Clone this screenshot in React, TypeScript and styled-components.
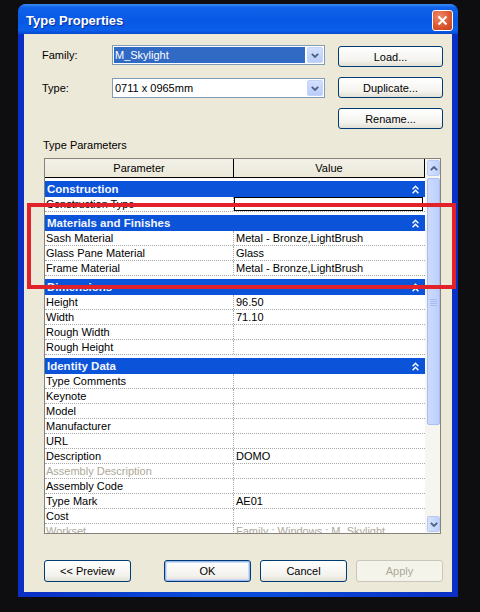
import styled, { createGlobalStyle } from 'styled-components';

const GlobalStyle = createGlobalStyle`
  html, body {
    margin: 0;
    padding: 0;
    background: #0e0e11;
  }
  body {
    width: 480px;
    height: 612px;
    overflow: hidden;
    font-family: "Liberation Sans", Arial, sans-serif;
    font-size: 11px;
  }
`;

const Page = styled.div`
  position: relative;
  width: 480px;
  height: 612px;
  padding: 4px 0 0 18px;
  box-sizing: border-box;
`;

const Window = styled.div`
  width: 440px;
  height: 593px;
  display: flex;
  flex-direction: column;
  border-radius: 8px 8px 0 0;
  overflow: hidden;
  background: #0a45d6;
`;

const TitleBar = styled.div`
  height: 30px;
  flex: none;
  box-sizing: border-box;
  display: flex;
  align-items: center;
  justify-content: space-between;
  padding: 3px 5px 0 8px;
  background: linear-gradient(#3d8cf4 0%, #0f62ea 12%, #0758e4 55%, #0a5fea 88%, #0846cc 100%);
`;

const Title = styled.span`
  color: #fff;
  font-weight: bold;
  font-size: 13px;
  text-shadow: 1px 1px 0 #0b2f9c;
`;

const CloseButton = styled.div`
  width: 21px;
  height: 21px;
  box-sizing: border-box;
  border: 1px solid #fff;
  border-radius: 3px;
  background: radial-gradient(circle at 35% 30%, #f08a6a, #d9552e 60%, #c2401c);
  display: flex;
  align-items: center;
  justify-content: center;
`;

const Frame = styled.div`
  flex: 1;
  display: flex;
  padding: 0 6px 5px;
  background: linear-gradient(to right, #0a2fc4, #0a4ad9 40%, #0a4ad9 60%, #0a2fc4);
`;

const Client = styled.div`
  flex: 1;
  display: flex;
  flex-direction: column;
  background: #ece9d8;
  padding: 11px 9px 0 18px;
`;

const TopRow = styled.div`
  display: flex;
  justify-content: space-between;
`;

const FieldGrid = styled.div`
  display: grid;
  grid-template-columns: 70px 213px;
  grid-auto-rows: 20px;
  row-gap: 13px;
  align-items: center;
  align-self: flex-start;
`;

const FieldLabel = styled.span`
  color: #000;
`;

const Combo = styled.div`
  height: 20px;
  box-sizing: border-box;
  display: flex;
  border: 1px solid #7f9db9;
  background: #fff;
`;

const ComboText = styled.div<{ $selected?: boolean }>`
  flex: 1;
  margin: 1px 2px 1px 1px;
  padding-left: 1px;
  line-height: 16px;
  color: ${(p) => (p.$selected ? '#fff' : '#000')};
  background: ${(p) => (p.$selected ? '#316ac5' : 'transparent')};
`;

const ComboArrow = styled.div`
  width: 16px;
  margin: 1px 1px 1px 0;
  border-radius: 2px;
  background: linear-gradient(#d3e0fd, #b9cdf9);
  border: 1px solid #c3d3fb;
  box-sizing: border-box;
  display: flex;
  align-items: center;
  justify-content: center;
`;

const SideButtons = styled.div`
  display: flex;
  flex-direction: column;
  gap: 10px;
  margin-top: 1px;
`;

const Button = styled.button<{ $w: number; $h: number; $default?: boolean }>`
  width: ${(p) => p.$w}px;
  height: ${(p) => p.$h}px;
  box-sizing: border-box;
  padding: 0;
  font-family: "Liberation Sans", Arial, sans-serif;
  font-size: 11px;
  color: #000;
  border: 1px solid #003c74;
  border-radius: 3px;
  background: linear-gradient(#ffffff, #f4f3ee 70%, #e3e0d4);
  box-shadow: ${(p) => (p.$default ? 'inset 0 0 0 1px #9cb7ee, inset 0 0 0 2px #cddbf7' : 'none')};

  &:disabled {
    color: #aca899;
    border-color: #c9c7ba;
    background: #f5f4ea;
  }
`;

const GroupLabel = styled.div`
  margin: 10px 0 6px 1px;
  line-height: 13px;
  color: #000;
`;

const GridFrame = styled.div`
  margin-left: 2px;
  width: 397px;
  height: 376px;
  box-sizing: border-box;
  border: 1px solid #85837c;
  display: flex;
  background: #fff;
`;

const Grid = styled.div`
  width: 380px;
  display: flex;
  flex-direction: column;
  overflow: hidden;
`;

const HeaderRow = styled.div`
  height: 19px;
  flex: none;
  box-sizing: border-box;
  display: flex;
  border-bottom: 1px solid #000;
  background: linear-gradient(#f3f1e8, #ebe8d8);
`;

const HeaderCell = styled.div<{ $first?: boolean }>`
  ${(p) => (p.$first ? 'width: 189px;' : 'flex: 1;')}
  box-sizing: border-box;
  border-right: 1px solid #000;
  text-align: center;
  line-height: 18px;
  color: #000;
`;

const Body = styled.div`
  flex: 1;
  min-height: 0;
  overflow: hidden;
`;

const SectionHeader = styled.div`
  margin-top: 3px;
  height: 16px;
  display: flex;
  align-items: center;
  justify-content: space-between;
  padding: 0 6px 0 2px;
  background: #0b53d8;
  color: #f2f6ff;
  font-weight: bold;
  font-size: 11.5px;
`;

const Row = styled.div`
  height: 15px;
  box-sizing: border-box;
  display: flex;
  border-bottom: 1px dotted #a8a8a8;
`;

const Cell = styled.div<{ $first?: boolean; $muted?: boolean; $editing?: boolean }>`
  ${(p) => (p.$first ? 'width: 189px; border-right: 1px dotted #a8a8a8;' : 'flex: 1;')}
  box-sizing: border-box;
  padding-left: ${(p) => (p.$first ? 1 : 2)}px;
  line-height: 14px;
  white-space: nowrap;
  overflow: hidden;
  color: ${(p) => (p.$muted ? '#aca899' : '#000')};
  outline: ${(p) => (p.$editing ? '1px solid #000' : 'none')};
  outline-offset: -1px;
  margin-right: ${(p) => (p.$editing ? 2 : 0)}px;
`;

const Scrollbar = styled.div`
  width: 15px;
  display: flex;
  flex-direction: column;
  padding: 1px 0 1px 2px;
  box-sizing: border-box;
  background: #f6f5f0;
`;

const ScrollButton = styled.div`
  height: 16px;
  flex: none;
  box-sizing: border-box;
  border: 1px solid #b7cbf7;
  border-radius: 2px;
  background: linear-gradient(to right, #d6e2fd, #c0d2fb);
  display: flex;
  align-items: center;
  justify-content: center;
`;

const ScrollThumb = styled.div`
  height: 247px;
  flex: none;
  margin-top: 2px;
  box-sizing: border-box;
  border: 1px solid #a8bef2;
  border-radius: 2px;
  background: linear-gradient(to right, #cddafd, #bccffb);
  display: flex;
  align-items: center;
  justify-content: center;
`;

const ScrollSpace = styled.div`
  flex: 1;
`;

const Footer = styled.div`
  display: flex;
  justify-content: space-between;
  margin: 26px 0 0 2px;
`;

const FooterGroup = styled.div`
  display: flex;
  gap: 9px;
`;

const Annotation = styled.div`
  position: absolute;
  left: 27px;
  top: 203px;
  width: 429px;
  height: 86px;
  box-sizing: border-box;
  border: 4px solid #e2222a;
  pointer-events: none;
`;

type Param = { name: string; value?: string; muted?: boolean; editing?: boolean };
type Section = { title: string; rows: Param[] };

const sections: Section[] = [
  { title: 'Construction', rows: [{ name: 'Construction Type', editing: true }] },
  {
    title: 'Materials and Finishes',
    rows: [
      { name: 'Sash Material', value: 'Metal - Bronze,LightBrush' },
      { name: 'Glass Pane Material', value: 'Glass' },
      { name: 'Frame Material', value: 'Metal - Bronze,LightBrush' },
    ],
  },
  {
    title: 'Dimensions',
    rows: [
      { name: 'Height', value: '96.50' },
      { name: 'Width', value: '71.10' },
      { name: 'Rough Width' },
      { name: 'Rough Height' },
    ],
  },
  {
    title: 'Identity Data',
    rows: [
      { name: 'Type Comments' },
      { name: 'Keynote' },
      { name: 'Model' },
      { name: 'Manufacturer' },
      { name: 'URL' },
      { name: 'Description', value: 'DOMO' },
      { name: 'Assembly Description', muted: true },
      { name: 'Assembly Code' },
      { name: 'Type Mark', value: 'AE01' },
      { name: 'Cost' },
      { name: 'Workset', value: 'Family : Windows : M_Skylight', muted: true },
    ],
  },
];

const Collapse = () => (
  <svg width="7" height="9" viewBox="0 0 7 9">
    <path d="M0.6 4.2 L3.5 1.2 L6.4 4.2 M0.6 8.2 L3.5 5.2 L6.4 8.2" stroke="#fff" strokeWidth="1.4" fill="none" />
  </svg>
);

const Chevron = ({ up }: { up?: boolean }) => (
  <svg width="8" height="5" viewBox="0 0 8 5">
    <path
      d={up ? 'M0.8 4.2 L4 1 L7.2 4.2' : 'M0.8 0.8 L4 4 L7.2 0.8'}
      stroke="#4d6185"
      strokeWidth="1.8"
      fill="none"
    />
  </svg>
);

export default function App() {
  return (
    <Page>
      <GlobalStyle />
      <Window>
        <TitleBar>
          <Title>Type Properties</Title>
          <CloseButton>
            <svg width="11" height="11" viewBox="0 0 11 11">
              <path d="M1.5 1.5 L9.5 9.5 M9.5 1.5 L1.5 9.5" stroke="#fff" strokeWidth="2" />
            </svg>
          </CloseButton>
        </TitleBar>
        <Frame>
          <Client>
            <TopRow>
              <FieldGrid>
                <FieldLabel>Family:</FieldLabel>
                <Combo>
                  <ComboText $selected>M_Skylight</ComboText>
                  <ComboArrow>
                    <Chevron />
                  </ComboArrow>
                </Combo>
                <FieldLabel>Type:</FieldLabel>
                <Combo>
                  <ComboText>0711 x 0965mm</ComboText>
                  <ComboArrow>
                    <Chevron />
                  </ComboArrow>
                </Combo>
              </FieldGrid>
              <SideButtons>
                <Button $w={105} $h={21}>Load...</Button>
                <Button $w={105} $h={21}>Duplicate...</Button>
                <Button $w={105} $h={21}>Rename...</Button>
              </SideButtons>
            </TopRow>

            <GroupLabel>Type Parameters</GroupLabel>
            <GridFrame>
              <Grid>
                <HeaderRow>
                  <HeaderCell $first>Parameter</HeaderCell>
                  <HeaderCell>Value</HeaderCell>
                </HeaderRow>
                <Body>
                  {sections.map((s) => (
                    <div key={s.title}>
                      <SectionHeader>
                        <span>{s.title}</span>
                        <Collapse />
                      </SectionHeader>
                      {s.rows.map((r) => (
                        <Row key={r.name}>
                          <Cell $first $muted={r.muted}>{r.name}</Cell>
                          <Cell $muted={r.muted} $editing={r.editing}>{r.value}</Cell>
                        </Row>
                      ))}
                    </div>
                  ))}
                </Body>
              </Grid>
              <Scrollbar>
                <ScrollButton>
                  <Chevron up />
                </ScrollButton>
                <ScrollThumb>
                  <svg width="7" height="8" viewBox="0 0 7 8">
                    <path d="M0 1.5 H7 M0 3.5 H7 M0 5.5 H7 M0 7.5 H7" stroke="#a6bcf0" strokeWidth="1" />
                  </svg>
                </ScrollThumb>
                <ScrollSpace />
                <ScrollButton>
                  <Chevron />
                </ScrollButton>
              </Scrollbar>
            </GridFrame>

            <Footer>
              <Button $w={87} $h={22}>&lt;&lt; Preview</Button>
              <FooterGroup>
                <Button $w={87} $h={22} $default>OK</Button>
                <Button $w={87} $h={22}>Cancel</Button>
                <Button $w={87} $h={22} disabled>Apply</Button>
              </FooterGroup>
            </Footer>
          </Client>
        </Frame>
      </Window>
      <Annotation />
    </Page>
  );
}
